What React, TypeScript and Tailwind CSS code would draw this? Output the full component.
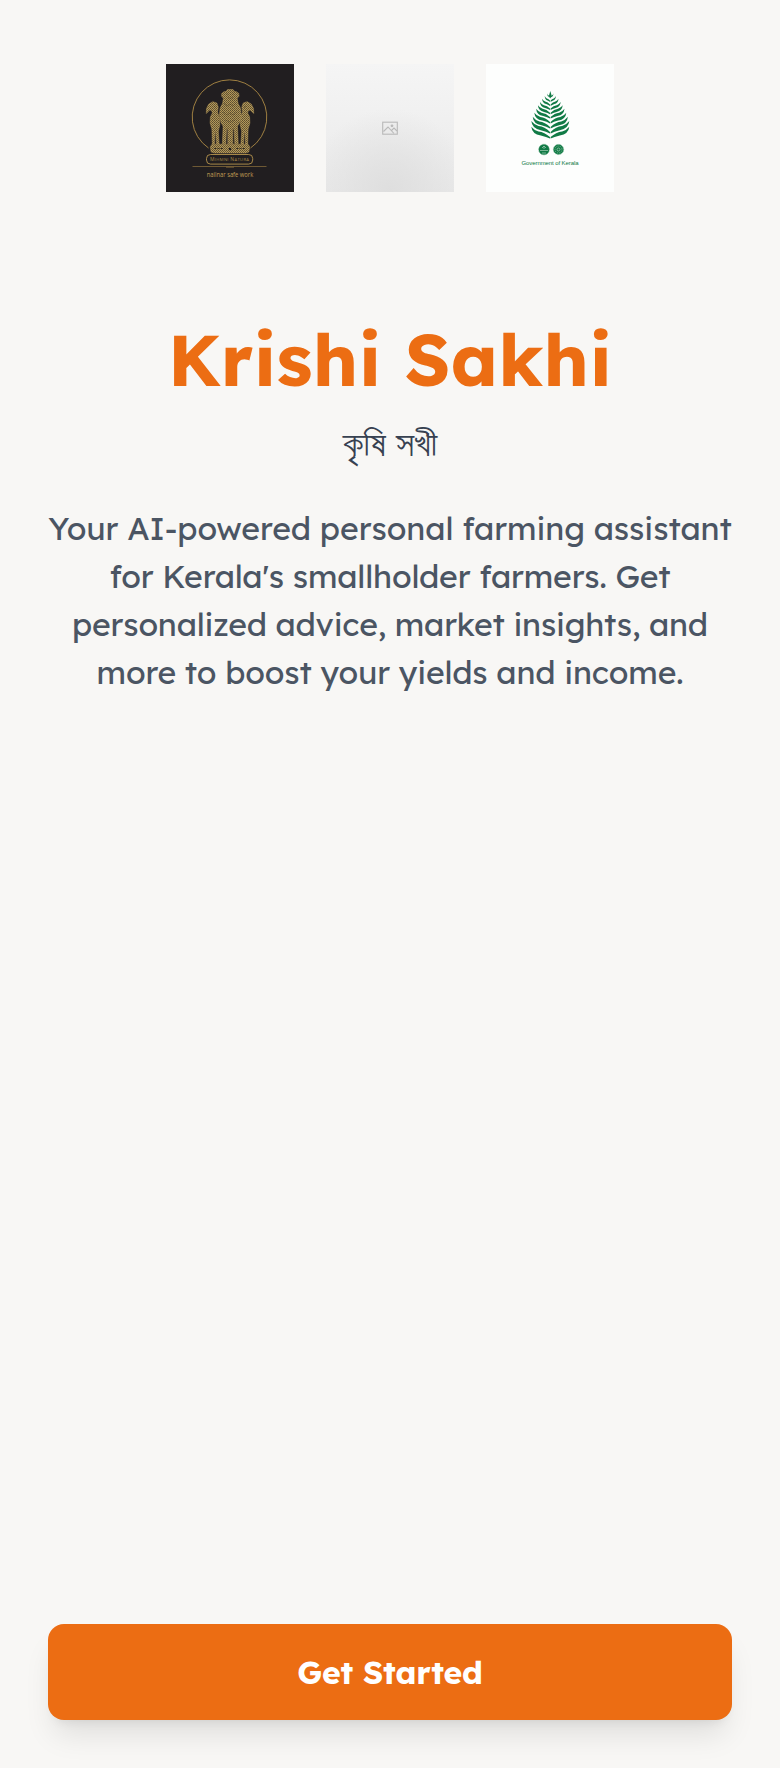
import React from 'react';

// Each frond: [tip distance from the stem, tip y, y where it joins the stem]
const fronds = [
  [3.2, 29.3, 34],
  [5.6, 32, 38],
  [8.2, 34.7, 42],
  [10.4, 38, 46],
  [12.4, 41.3, 50.2],
  [14.2, 44.7, 54.6],
  [16, 48.7, 59.4],
  [17.6, 52.7, 64.4],
  [19, 57, 69.4],
  [19, 62.7, 74.6],
];

function frondPath(w: number, tip: number, join: number) {
  const h = join - tip;
  return `M${w} ${tip}Q${w * 0.96} ${join - h * 0.38} ${w * 0.5} ${join - h * 0.26}Q${w * 0.2} ${join - h * 0.14} .3 ${join}V${join - 1.5}Q${w * 0.3} ${join - h * 0.55} ${w * 0.62} ${join - h * 0.6}Q${w * 0.85} ${join - h * 0.7} ${w} ${tip}z`;
}

function Emblem() {
  return (
    <svg viewBox="0 0 128 128" className="size-32 bg-[#211e20]" fill="none">
      <defs>
        <pattern id="mesh" width="2" height="2" patternUnits="userSpaceOnUse">
          <rect width="2" height="2" fill="#b3985a" />
          <rect width="1" height="1" fill="#5c4e2f" />
          <rect x="1" y="1" width="1" height="1" fill="#6b5b37" />
        </pattern>
      </defs>
      <path d="M42.5 84A37.300 37.300 0 1 1 84.500 84" stroke="#ad8a45" strokeWidth=".9" />
      <g fill="url(#mesh)" stroke="#b79a5a" strokeWidth=".45">
        <path d="M40.300 49.500l.2-5 2.300-4.500 4-2.300 4 1.300 1.400 4-.7 5 2 6 .3 7-1.500 6 .8 13h-2.600l-.8-12h-.6l-.6 12h-2.200l-.4-15-1.800-6 .3-6 2-4-.8-2.500-1.800-.5-1.500 1.500z" />
        <path d="M87.700 49.500l-.2-5-2.300-4.500-4-2.300-4 1.300-1.400 4 .7 5-2 6-.3 7 1.500 6-.8 13h2.600l.8-12h.6l.6 12h2.200l.4-15 1.800-6-.3-6-2-4 .8-2.500 1.800-.5 1.500 1.500z" />
        <path d="M55.700 29.500l2.300-1.800 2-.2 1.500-2h5.500l1.500 2 2 .2 2.300 1.800.2 2.800-1.800 2 .8 5 2.500 5 .7 7-1.500 7-2.200 4 .7 17.500h-3.400l-.8-15h-1.200v15h-5v-15h-1.200l-.8 15h-3.400l.7-17.500-2.200-4-1.500-7 .7-7 2.500-5 .8-5-1.800-2z" />
        <path d="M46 80.200h36l1.600 2.500-.8 5.300-3 1H48.500l-3.400-1-.8-5.300z" />
      </g>
      <path d="M60.500 29.500l1.500 1M68 29.500l-1.500 1M61.500 33.500q2.700 1.500 5.400 0M58 39l3 3 3-2 3 2 3-3M57 48l4 3 3-2 3 2 4-3M59 56l5 2 5-2M48 42l2 2M80 42l-2 2" stroke="#3c3322" strokeWidth=".5" opacity=".6" />
      <path d="M48 84.500h10M70 84.500h10" stroke="#332c21" strokeWidth="1" strokeDasharray="2 1.500" />
      <circle cx="64" cy="85" r="1.300" fill="#211e20" />
      <rect x="40.500" y="90.500" width="46.200" height="9.600" rx="4" stroke="#b6944e" strokeWidth=".9" />
      <path d="M26.500 102.500h74M60 103.200h8" stroke="#8f733d" strokeWidth=".7" />
      <text x="63.500" y="97.200" textAnchor="middle" textLength="39" fill="#a48646" className="font-['Open_Sans',sans-serif] text-[4.200px]">
        <tspan className="text-[5px]">M</tspan>IHMNI <tspan className="text-[5px]">N</tspan>ATURA
      </text>
      <text x="64" y="112.600" textAnchor="middle" textLength="46.500" lengthAdjust="spacingAndGlyphs" fill="#c09d54" className="font-['Open_Sans',sans-serif] text-[6.200px]">nailnar safe work</text>
    </svg>
  );
}

function Placeholder() {
  return (
    <svg viewBox="0 0 128 128" className="size-32" fill="none">
      <defs>
        <linearGradient id="base" x2="0" y2="1">
          <stop stopColor="#f5f5f5" />
          <stop offset=".35" stopColor="#f1f1f1" />
          <stop offset="1" stopColor="#e9e9e9" />
        </linearGradient>
        <radialGradient id="shade" cx=".5" cy="1" r=".65">
          <stop stopColor="#dedede" />
          <stop offset="1" stopColor="#dedede" stopOpacity="0" />
        </radialGradient>
      </defs>
      <rect width="128" height="128" fill="url(#base)" />
      <rect width="128" height="128" fill="url(#shade)" />
      <g stroke="#b9b9b9" strokeWidth="1.100">
        <rect x="56.700" y="58.200" width="14.600" height="12" />
        <path d="M57.500 67.500l4.500-4.500 6 6.500M65.500 66.500l2.500-2.500 3 3" />
      </g>
      <circle cx="66" cy="61.800" r="1.400" fill="#b9b9b9" />
    </svg>
  );
}

function KeralaLogo() {
  return (
    <svg viewBox="0 0 128 128" className="size-32 bg-[#fdfefd]" fill="#107a45">
      <path d="M64.300 27l1.300 4.500-1.300 3-1.300-3z" />
      <g transform="translate(64.300 0)">
        {fronds.map(([w, tip, join]) => (
          <g key={tip}>
            <path d={frondPath(w, tip, join)} />
            <path d={frondPath(w, tip, join)} transform="scale(-1 1)" />
          </g>
        ))}
      </g>
      <circle cx="58" cy="85.500" r="5.300" stroke="#5fa67e" strokeWidth=".7" strokeDasharray="1 .7" />
      <circle cx="72.500" cy="85.500" r="5.100" stroke="#5fa67e" strokeWidth=".7" strokeDasharray="1 .7" />
      <g fill="none" stroke="#a8d0b8" strokeWidth=".7">
        <path d="M54 86.500h8M56 84l2-2 2 2M56 89h4M58 82v3" />
        <circle cx="72.500" cy="85.500" r="3.500" strokeDasharray="1 1" />
        <circle cx="72.500" cy="85.500" r="1.500" />
      </g>
      <text x="64" y="100.800" textAnchor="middle" textLength="57" className="font-['Liberation_Sans',sans-serif] text-[6px]">Government of Kerala</text>
    </svg>
  );
}

export default function App() {
  return (
    <main className="flex min-h-[1768px] w-full flex-col bg-[#f8f7f5] px-12 pt-16 pb-12 font-['Lexend','Inter',sans-serif]">
      <header className="flex justify-center gap-8">
        <Emblem />
        <Placeholder />
        <KeralaLogo />
      </header>
      <section className="mt-[127px] text-center">
        <h1 className="text-[72px] leading-[80px] font-bold tracking-[0.2px] text-[#ec6d13]">Krishi Sakhi</h1>
        <p className="mt-4 h-14 font-['Lexend','FreeSans',sans-serif] text-[36px] leading-[56px] text-[#374151]">কৃষি সখী</p>
        <p className="mt-[33px] text-[32px] leading-[48px] whitespace-nowrap text-[#4b5563]">
          <span className="block tracking-[-0.09px]">Your AI-powered personal farming assistant</span>
          <span className="block tracking-[-0.17px]">for Kerala's smallholder farmers. Get</span>
          <span className="block tracking-[-0.22px]">personalized advice, market insights, and</span>
          <span className="block tracking-[-0.15px]">more to boost your yields and income.</span>
        </p>
      </section>
      <button className="mt-auto h-24 w-full rounded-2xl bg-[#ec6d13] text-[32px] font-bold tracking-[-0.25px] text-white shadow-[0_20px_30px_-6px_rgba(0,0,0,0.1),0_8px_12px_-8px_rgba(0,0,0,0.1)]">
        Get Started
      </button>
    </main>
  );
}
